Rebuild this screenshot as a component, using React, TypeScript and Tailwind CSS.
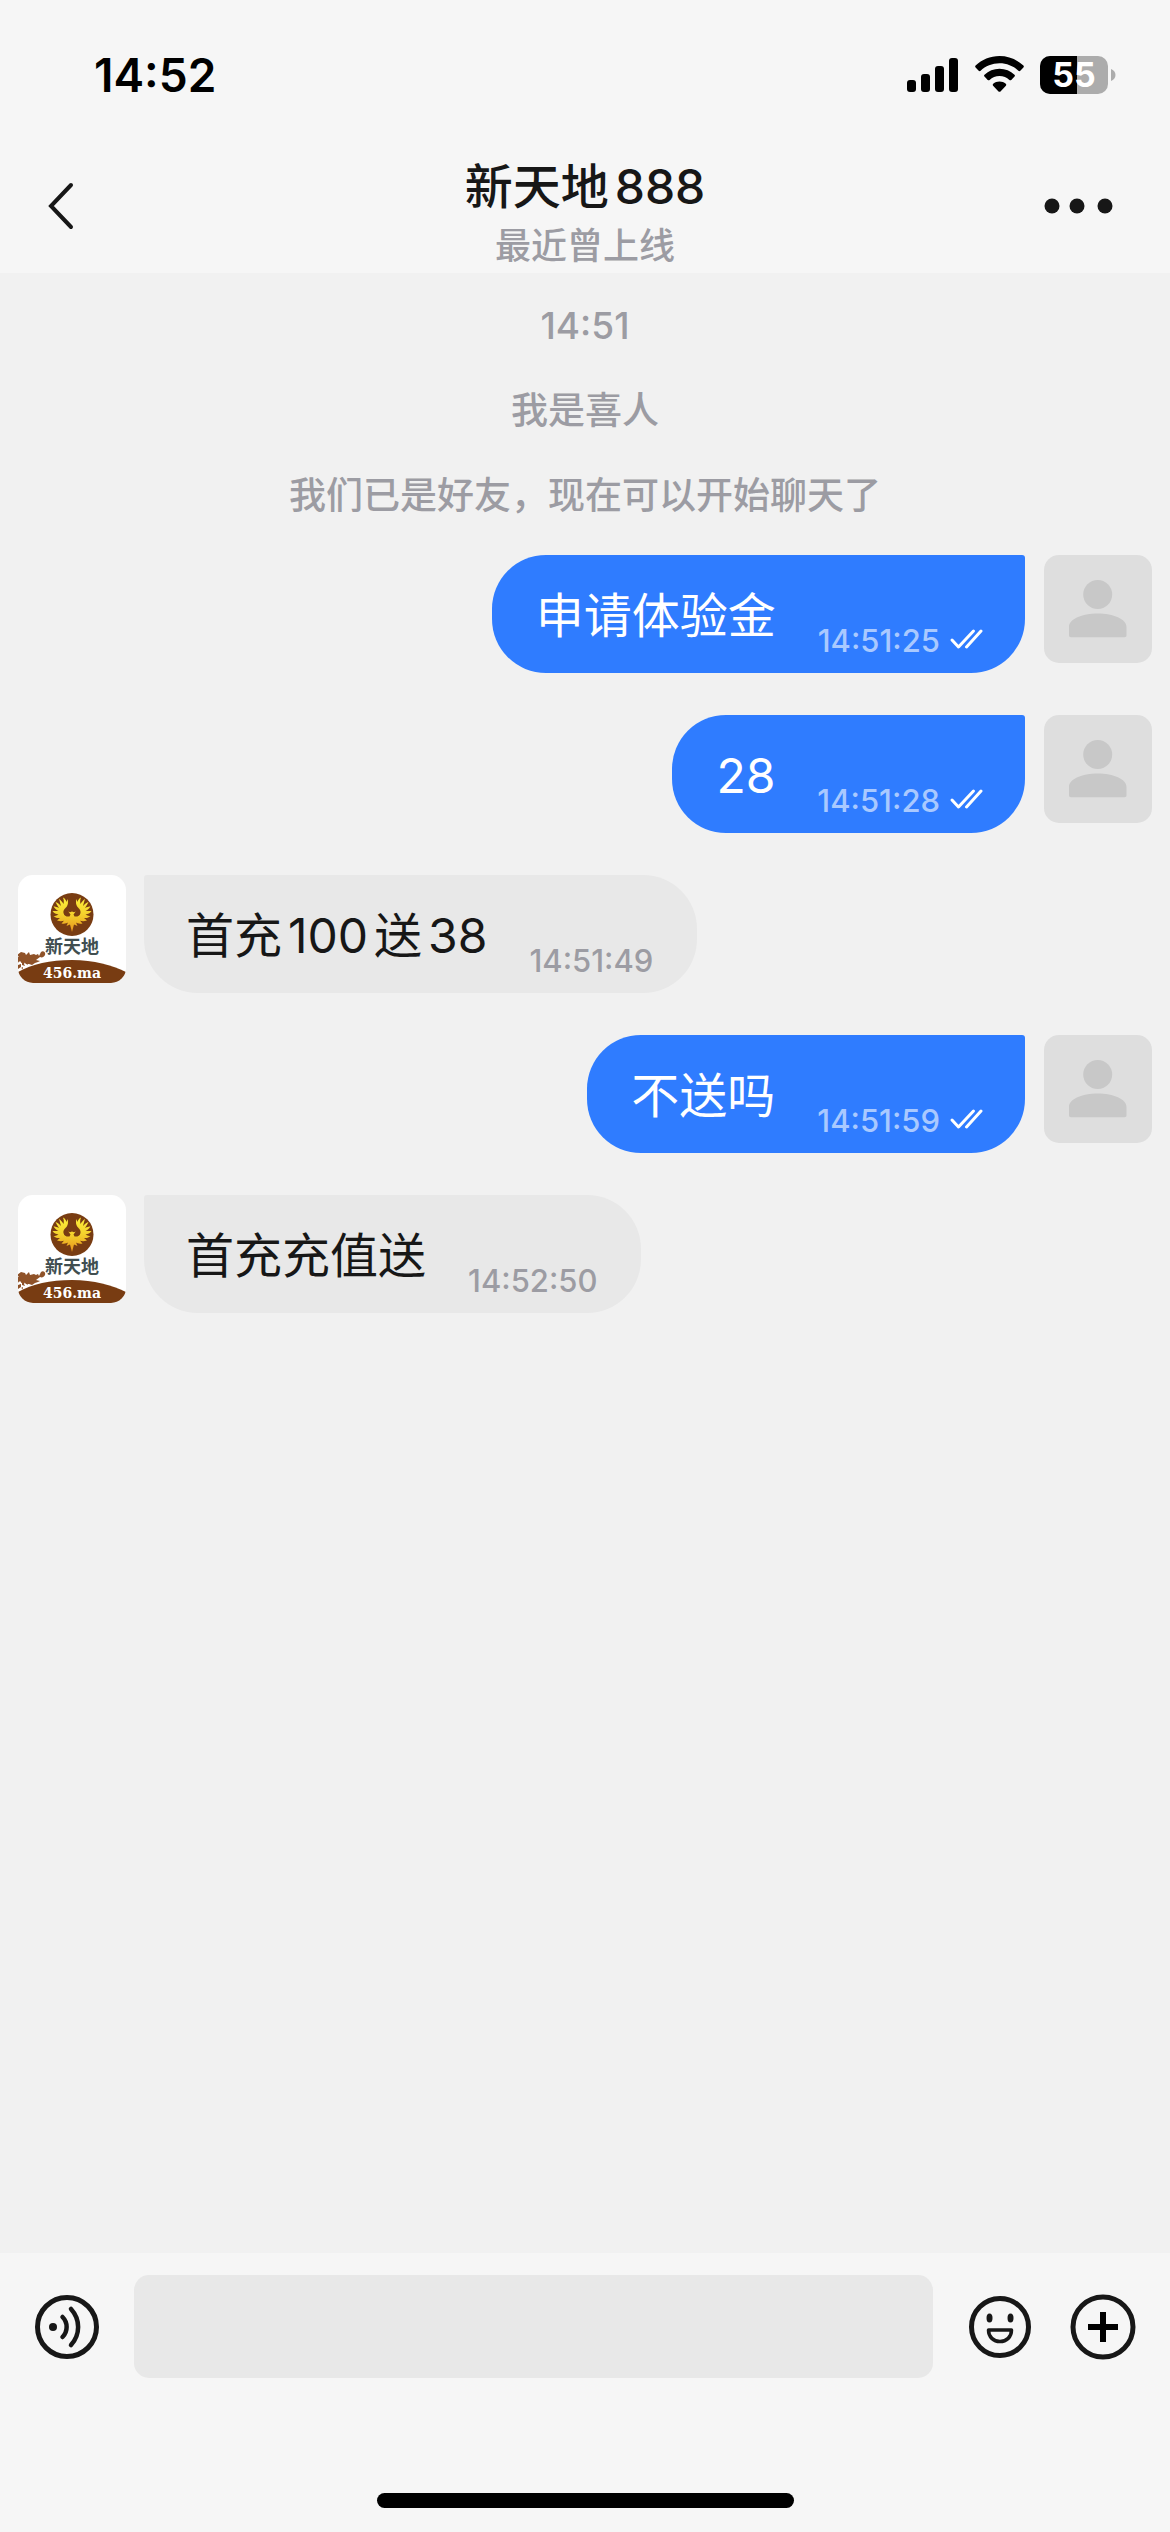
import { useState } from 'react'

type Message = {
  id: number
  mine: boolean
  text: string
  time: string
}

const notices = ['14:51', '我是喜人', '我们已是好友，现在可以开始聊天了']

const messages: Message[] = [
  { id: 1, mine: true, text: '申请体验金', time: '14:51:25' },
  { id: 2, mine: true, text: '28', time: '14:51:28' },
  { id: 3, mine: false, text: '首充100送38', time: '14:51:49' },
  { id: 4, mine: true, text: '不送吗', time: '14:51:59' },
  { id: 5, mine: false, text: '首充充值送', time: '14:52:50' },
]

// left half of the phoenix, mirrored for the right one
const WING =
  'M54 36.500 52 37.300 50.300 36.600 52.500 39.500 51.500 41.500C49 42 46 41 45.500 38c-.5-3 1.500-4.500 3-6 1.500-2 2-5 1-8l-1 3c-.5-2-1.500-3.500-3.500-4.500 1 2.500 1 4.500.5 6.500-1.500-2.500-3-4-4.500-5 1 3 1.500 5 2 7-2-2.500-4-3.500-5.500-4 1.500 3 2.500 4.500 3.500 6-2-1-4-1.500-5.500-1.500 1.500 2.500 3 3.500 5 4.500h-6c1.500 2.500 3.500 3 6 3.500-2 1-3.500 1.500-5 1.500 2.500 2 4.500 2.300 6.500 2l-3 2.500c3 1 5 .7 7 .3l-2.500 2.700c3 .5 5 0 6.500-1L48.500 51l3.500-1.500.8 3L54 57Z'

function StatusBar() {
  return (
    <div className="flex h-[150px] items-center justify-between pl-[94px] pr-[54px] text-black">
      <span className="text-[46px] leading-[60px] font-semibold">14:52</span>
      <div className="flex items-center">
        <svg className="h-[38px] w-[51px]" viewBox="0 0 51 38">
          <rect x="0" y="24" width="9" height="12" rx="3" />
          <rect x="14" y="18" width="9" height="18" rx="3" />
          <rect x="28" y="10" width="9" height="26" rx="3" />
          <rect x="42" y="2" width="9" height="34" rx="3" />
        </svg>
        <svg className="ml-[17px] h-[38px] w-[49px]" viewBox="0 0 49 38">
          <path d="M24.500 0C15.200 0 6.800 3.700 .6 9.600c-.6.600-.6 1.400 0 2l3.100 3.200c.5.500 1.400.500 1.900 0C10.500 10.100 17.200 7.300 24.500 7.300s14 2.800 18.900 7.500c.5.500 1.400.500 1.900 0l3.100-3.200c.6-.6.6-1.400 0-2C42.200 3.700 33.800 0 24.500 0Z" />
          <path d="M24.500 12.800c-5.800 0-11 2.200-15 5.900-.6.500-.6 1.400 0 1.900l3.200 3.300c.5.500 1.300.5 1.900.1 2.600-2.400 6.100-3.900 9.900-3.900s7.300 1.500 9.900 3.900c.6.400 1.400.4 1.900-.1l3.200-3.300c.6-.5.6-1.400 0-1.900-4-3.700-9.200-5.900-15-5.900Z" />
          <path d="M24.500 25.600c-2.400 0-4.600.8-6.300 2.200-.6.500-.6 1.300-.1 1.900l5.400 5.700c.6.600 1.500.6 2 0l5.400-5.700c.5-.6.500-1.400-.1-1.900-1.700-1.400-3.900-2.200-6.300-2.200Z" />
        </svg>
        <div className="relative ml-[16px] flex h-[38px] w-[68px] items-center justify-center rounded-[10px] bg-[#acacac]">
          <div className="absolute inset-y-0 left-0 w-[37px] rounded-l-[10px] bg-black" />
          <span className="relative text-[34px] leading-[38px] font-bold text-white">55</span>
        </div>
        <svg className="ml-[3px] h-[12px] w-[5px]" viewBox="0 0 5 12" fill="#acacac">
          <path d="M0 0c2.600 1 4.500 3.200 4.500 6S2.600 11 0 12Z" />
        </svg>
      </div>
    </div>
  )
}

function Header() {
  return (
    <header className="bg-[#f6f6f6]">
      <StatusBar />
      <div className="flex h-[123px] items-start justify-between px-[40px]">
        <button type="button" aria-label="返回" className="mt-[26px] flex w-[88px] items-center">
          <svg className="h-[60px] w-[42px]" viewBox="0 0 42 60" fill="none" stroke="#171717" strokeWidth="4">
            <path d="M31 9 11 30l20 21" strokeLinecap="round" />
          </svg>
        </button>
        <div className="text-center">
          <h1 className="text-[48px] leading-[74px] font-medium text-[#171717] [text-autospace:normal]">新天地888</h1>
          <p className="text-[36px] leading-[44px] font-medium text-[#9c9ca3]">最近曾上线</p>
        </div>
        <button type="button" aria-label="更多" className="mt-[26px] flex w-[88px] items-center">
          <svg className="h-[60px] w-[88px]" viewBox="0 0 88 60" fill="#171717">
            <circle cx="10" cy="30" r="7.500" />
            <circle cx="35" cy="30" r="7.500" />
            <circle cx="63" cy="30" r="7.500" />
          </svg>
        </button>
      </div>
    </header>
  )
}

function UserAvatar() {
  return (
    <svg className="size-[108px] shrink-0 rounded-[15px] bg-[#dedede]" viewBox="0 0 108 108" fill="#c8c8c8">
      <circle cx="53.700" cy="39.500" r="14.500" />
      <path d="M25 72c0-8 13-13.500 28.700-13.500S82.500 64 82.500 72v8.500a1.700 1.700 0 0 1-1.700 1.700H26.700A1.700 1.700 0 0 1 25 80.500Z" />
    </svg>
  )
}

function ShopAvatar() {
  return (
    <svg className="size-[108px] shrink-0 rounded-[15px] bg-white" viewBox="0 0 108 108">
      <defs>
        <linearGradient id="wing" x1="0" y1="0" x2="0" y2="1">
          <stop offset="0" stopColor="#fdf03a" />
          <stop offset="0.500" stopColor="#f3d02c" />
          <stop offset="1" stopColor="#e8921c" />
        </linearGradient>
      </defs>
      <circle cx="54" cy="39.500" r="21.500" fill="#783c12" />
      <path d={WING} fill="url(#wing)" />
      <path d={WING} fill="url(#wing)" transform="matrix(-1 0 0 1 108 0)" />
      <text
        x="54"
        y="78"
        textAnchor="middle"
        fill="#404e50"
        fontSize="18"
        fontWeight="700"
        className="font-['Noto_Sans_CJK_SC',sans-serif]"
      >
        新天地
      </text>
      {/* small phoenix flying in from the left */}
      <g fill="#8f5228">
        <path d="m3 77 4 1 1 2 3-3 1 3 4-1 2 1 2-1 1 2 2-4c2-2 5 0 4 3-1 2-3 3-5 2l-4 3 4 1-2 1-3 1-3 2-3-1-3 0-2-2-3 1 0-2-4 1 2-3-4 0 4-2-2-2Z" />
        <path d="m0 82 3 1-1 2 2 2-3-1-1 2ZM0 90l3-1 0 3-3 2ZM4 87l3 0-1 2 1 2-3-1ZM8 87l3 1-2 2ZM3 93l2-1 0 2ZM12 86l2 1-2 1Z" />
      </g>
      <path d="M0 97C14 89 32 85 54 85s40 5 54 12v11H0Z" fill="#783c12" />
      <text
        x="54"
        y="103"
        textAnchor="middle"
        fill="#fff"
        fontSize="14"
        fontWeight="700"
        className="font-['DejaVu_Serif',serif]"
      >
        456.ma
      </text>
    </svg>
  )
}

function ReadTicks() {
  return (
    <svg
      className="ml-[9px] h-[36px] w-[34px]"
      viewBox="0 0 34 36"
      fill="none"
      stroke="#fff"
      strokeWidth="3"
      strokeLinecap="round"
      strokeLinejoin="round"
    >
      <path d="m3 17 6.500 7L24.500 8" />
      <path d="M17.500 24 32 8" />
    </svg>
  )
}

function MessageRow({ message }: { message: Message }) {
  const { mine, text, time } = message

  if (mine) {
    return (
      <li className="flex items-start justify-end gap-[19px]">
        <div className="flex items-end gap-[42px] rounded-[54px] rounded-tr-[3px] bg-[#2f7cff] pt-[16px] pr-[42px] pb-[12px] pl-[44px]">
          <p className="text-[48px] leading-[90px] text-white [text-autospace:normal]">{text}</p>
          <div className="flex items-center">
            <time className="text-[31px] leading-[40px] font-medium text-[#a9c9ff]">{time}</time>
            <ReadTicks />
          </div>
        </div>
        <UserAvatar />
      </li>
    )
  }

  return (
    <li className="flex items-start gap-[18px]">
      <ShopAvatar />
      <div className="flex items-end gap-[42px] rounded-[54px] rounded-tl-[3px] bg-[#e8e8e8] pt-[16px] pr-[44px] pb-[12px] pl-[42px]">
        <p className="text-[48px] leading-[90px] text-[#171717] [text-autospace:normal]">{text}</p>
        <time className="text-[31px] leading-[40px] font-medium text-[#9c9ca3]">{time}</time>
      </div>
    </li>
  )
}

function Composer() {
  const [draft, setDraft] = useState('')

  return (
    <footer className="flex flex-col items-center bg-[#f6f6f6] pt-[22px] pb-[24px]">
      <div className="flex w-full items-center px-[34px]">
        <button type="button" aria-label="语音">
          <svg className="size-[66px]" viewBox="0 0 66 66" fill="none" stroke="#171717" strokeLinecap="round">
            <circle cx="33" cy="33" r="29.500" strokeWidth="5" />
            <circle cx="19" cy="33" r="4" fill="#171717" stroke="none" />
            <path d="M28.500 23c5.500 5.500 5.500 14.500 0 20" strokeWidth="4.500" />
            <path d="M37 15c9.500 10.500 9.500 25.500 0 36" strokeWidth="4.500" />
          </svg>
        </button>
        <input
          aria-label="消息"
          value={draft}
          onChange={(e) => setDraft(e.target.value)}
          className="mx-[34px] h-[103px] min-w-0 flex-1 rounded-[15px] bg-[#e8e8e8] px-[24px] text-[48px] outline-none"
        />
        <button type="button" aria-label="表情">
          <svg className="size-[66px]" viewBox="0 0 66 66" fill="none" stroke="#171717">
            <circle cx="33" cy="33" r="28.500" strokeWidth="5" />
            <ellipse cx="22.500" cy="24" rx="3" ry="4.500" fill="#171717" stroke="none" />
            <ellipse cx="43.500" cy="24" rx="3" ry="4.500" fill="#171717" stroke="none" />
            <path d="M21.500 36h23c0 7-5 11.500-11.500 11.500S21.500 43 21.500 36Z" strokeWidth="3.500" strokeLinejoin="round" />
          </svg>
        </button>
        <button type="button" aria-label="添加" className="ml-[37px]">
          <svg className="size-[66px]" viewBox="0 0 66 66" fill="none">
            <circle cx="33" cy="33" r="30" stroke="#171717" strokeWidth="5" />
            <path d="M33 18v30M18 33h30" stroke="#000" strokeWidth="6" />
          </svg>
        </button>
      </div>
      <div className="mt-[115px] h-[15px] w-[417px] rounded-full bg-black" />
    </footer>
  )
}

export default function App() {
  return (
    <div className="flex min-h-screen flex-col bg-[#f1f1f1] font-['Inter','Noto_Sans_CJK_SC',sans-serif]">
      <Header />
      <main className="flex flex-1 flex-col gap-[33px] pt-[27px]">
        {notices.map((notice) => (
          <p key={notice} className="text-center text-[37px] leading-[52px] font-medium text-[#9c9ca3]">
            {notice}
          </p>
        ))}
        <ul className="flex flex-col gap-[42px] px-[18px]">
          {messages.map((message) => (
            <MessageRow key={message.id} message={message} />
          ))}
        </ul>
      </main>
      <Composer />
    </div>
  )
}
